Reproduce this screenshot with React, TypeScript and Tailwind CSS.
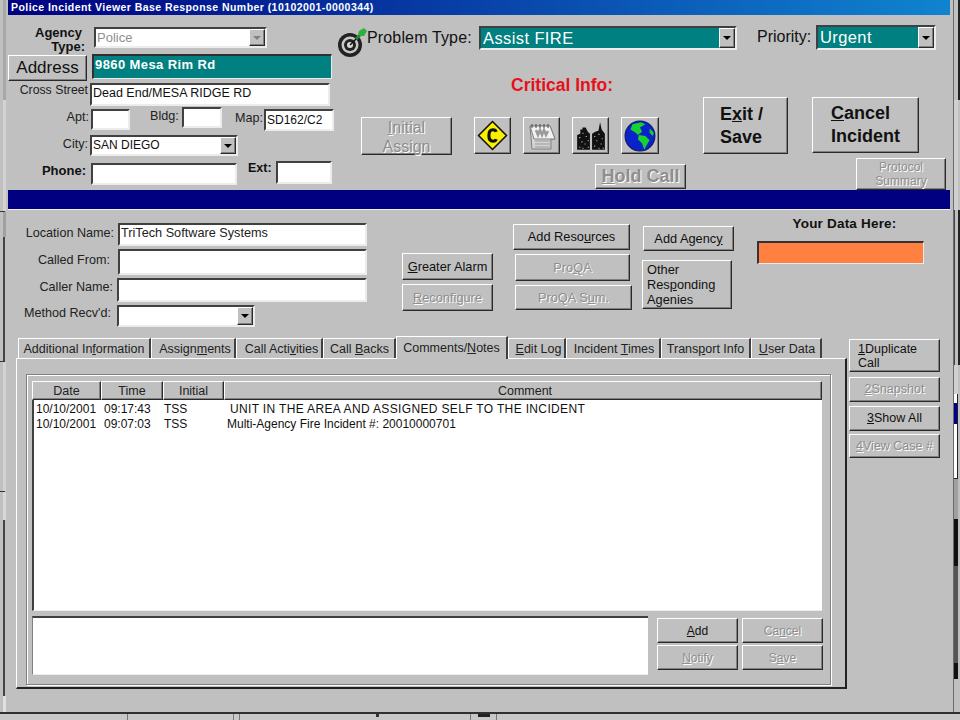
import type { ReactNode } from 'react';

const raised = 'border border-t-white border-l-white border-r-[#2a2a2a] border-b-[#2a2a2a] shadow-[inset_-1px_-1px_0_#808080]';
const sunken = 'border-2 border-t-[#404040] border-l-[#404040] border-r-[#ececec] border-b-[#ececec]';
const disabledText = 'text-[#8e8e8e] [text-shadow:1px_1px_0_#fff]';

function Btn({ className = '', disabled, children }: { className?: string; disabled?: boolean; children: ReactNode }) {
  return (
    <div className={`${raised} bg-[#c0c0c0] flex items-center justify-center shrink-0 ${disabled ? disabledText : 'text-[#111]'} ${className}`}>
      {children}
    </div>
  );
}

function Field({ className = '', children }: { className?: string; children?: ReactNode }) {
  return <div className={`${sunken} bg-white flex items-center px-[1px] shrink-0 whitespace-nowrap ${className}`}>{children}</div>;
}

function Arrow({ disabled }: { disabled?: boolean }) {
  return (
    <div className={`${raised} w-[16px] h-full bg-[#c0c0c0] flex items-center justify-center shrink-0`}>
      <div className={`w-0 h-0 border-x-[4px] border-x-transparent border-t-[4px] ${disabled ? 'border-t-[#808080]' : 'border-t-black'}`} />
    </div>
  );
}

function Combo({ className = '', text, textClass = '', disabled }: { className?: string; text?: string; textClass?: string; disabled?: boolean }) {
  return (
    <div className={`${sunken} flex shrink-0 ${className}`}>
      <div className={`flex-1 flex items-center px-[1px] whitespace-nowrap ${textClass}`}>{text}</div>
      <Arrow disabled={disabled} />
    </div>
  );
}

function Label({ className = '', children }: { className?: string; children: ReactNode }) {
  return <div className={`text-[12.6px] leading-[14px] text-[#222] whitespace-nowrap shrink-0 ${className}`}>{children}</div>;
}

function TargetIcon() {
  return (
    <svg viewBox="0 0 30 30" className="w-[30px] h-[30px] shrink-0">
      <circle cx="12" cy="18" r="12" fill="#222" />
      <circle cx="12" cy="18" r="8.5" fill="#c8c8c8" />
      <circle cx="12" cy="18" r="6" fill="#222" />
      <circle cx="12" cy="18" r="3" fill="#d8d8d8" />
      <path d="M12 18 L19 11" stroke="#111" strokeWidth="1.5" />
      <path d="M18 12 L22 8" stroke="#1c8c2c" strokeWidth="3" />
      <path d="M21 4 L26 1 L29 4 L26 9 L23 9 L20 7 Z" fill="#2cb040" />
    </svg>
  );
}

function DiamondIcon() {
  return (
    <svg viewBox="0 0 30 30" className="w-[31px] h-[31px]">
      <path d="M15 1.5 L28.5 15 L15 28.5 L1.5 15 Z" fill="#f8f000" stroke="#111" strokeWidth="1.5" />
      <path d="M18.5 11.5 Q18 9.5 15.5 9.5 Q11.5 9.5 11.5 15 Q11.5 20.5 15.5 20.5 Q18 20.5 18.5 18.5" fill="none" stroke="#111" strokeWidth="3" />
    </svg>
  );
}

function NotepadIcon() {
  return (
    <svg viewBox="0 0 30 30" className="w-[30px] h-[30px]">
      <path d="M3 5 H23 L28 18 H24 V28 H5 Z" fill="#d4d4d4" stroke="#808080" />
      <path d="M3 5 H23 L28 18 H7 Z" fill="#f2f2f2" stroke="#808080" />
      <path d="M5 3 V7 M9 3 V7 M13 3 V7 M17 3 V7 M21 3 V7" stroke="#444" strokeWidth="1" />
      <path d="M9 9 L11 14 L13 9 L15 14 L17 9 L19 14 L21 10" fill="none" stroke="#9a9a9a" strokeWidth="2.5" />
      <path d="M8 20 H24 M8 23 H24 M8 26 H24" stroke="#9a9a9a" />
    </svg>
  );
}

function CityIcon() {
  return (
    <svg viewBox="0 0 30 30" className="w-[32px] h-[32px]">
      <path d="M2 28 V14 L5 13 V9 L7 9 V7 L10 7 L12 11 L14 13 V28 Z" fill="#111" />
      <path d="M16 28 V13 L19 11 L22 10 L23.5 2 L25 9 L28 13 V28 Z" fill="#111" />
      <path d="M4 16h1v1H4zM7 12h1v1H7zM10 15h1v1h-1zM12 19h1v1h-1zM6 20h1v1H6zM9 22h1v1H9zM4 25h1v1H4zM12 25h1v1h-1zM7 26h1v1H7zM18 15h1v1h-1zM22 13h1v1h-1zM25 17h1v1h-1zM20 19h1v1h-1zM24 22h1v1h-1zM18 24h1v1h-1zM22 26h1v1h-1zM26 26h1v1h-1z" fill="#c4c4c4" />
    </svg>
  );
}

function GlobeIcon() {
  return (
    <svg viewBox="0 0 30 30" className="w-[32px] h-[32px]">
      <circle cx="15" cy="15" r="14" fill="#0a22c8" stroke="#0a1460" />
      <path d="M8 4 L16 2 L20 4 L15 7 L17 11 L13 14 L11 12 L6 9 Z" fill="#18d030" />
      <path d="M14 14 L20 15 L24 19 L21 24 L19 28 L17 22 L13 18 Z" fill="#18d030" />
      <path d="M24 8 L28 12 L27 15 L24 12 Z" fill="#18d030" />
    </svg>
  );
}

const tabs: { label: ReactNode; w: string; pad?: string; active?: boolean }[] = [
  { label: <>Additional In<u>f</u>ormation</>, w: 'w-[133px]' },
  { label: <>Assign<u>m</u>ents</>, w: 'w-[85px]', pad: 'pl-[4px]' },
  { label: <>Call Acti<u>v</u>ities</>, w: 'w-[87px]', pad: 'pl-[5px]' },
  { label: <>Call <u>B</u>acks</>, w: 'w-[73px]', pad: 'pl-[1px]' },
  { label: <>Comments/<u>N</u>otes</>, w: 'w-[112px]', active: true },
  { label: <><u>E</u>dit Log</>, w: 'w-[58px]', pad: 'pl-[4px]' },
  { label: <>Incident <u>T</u>imes</>, w: 'w-[95px]', pad: 'pl-[2px]' },
  { label: <>Trans<u>p</u>ort Info</>, w: 'w-[90px]' },
  { label: <><u>U</u>ser Data</>, w: 'w-[71px]', pad: 'pl-[2px]' },
];

const rows = [
  { date: '10/10/2001', time: '09:17:43', initial: 'TSS', comment: 'UNIT IN THE AREA AND ASSIGNED SELF TO THE INCIDENT', cls: 'pl-[4px] tracking-[0.35px]' },
  { date: '10/10/2001', time: '09:07:03', initial: 'TSS', comment: 'Multi-Agency Fire Incident #: 20010000701', cls: 'pl-[1px]' },
];

export default function App() {
  return (
    <div className="w-[960px] h-[720px] bg-[#c0c0c0] flex flex-col overflow-hidden font-['Liberation_Sans',Arial,sans-serif]">
      <div className="h-[712px] flex shrink-0">
        {/* bits of the desktop windows showing past the left edge */}
        <div className="w-[8px] shrink-0 flex flex-col">
          <div className="h-[100px] w-[3px] ml-[3px] bg-[#a8a8a8]" />
          <div className="h-[111px] w-[3px] ml-[3px] bg-[#d2d2d2]" />
          <div className="h-[1px] w-[5px] bg-[#333]" />
          <div className="h-[25px] w-[3px] ml-[3px] bg-[#a0a0a0]" />
          <div className="h-[124px] w-[2px] ml-[3px] bg-[#444]" />
          <div className="h-[1px] w-[5px] bg-[#333]" />
          <div className="h-[129px] w-[3px] ml-[3px] bg-[#d2d2d2]" />
          <div className="h-[1px] w-[5px] bg-[#333]" />
          <div className="h-[28px] w-[3px] ml-[3px] bg-[#d8d8d8]" />
          <div className="h-[176px] w-[2px] ml-[3px] bg-[#444]" />
          <div className="h-[16px] w-[3px] ml-[3px] bg-[#e0e0e0]" />
        </div>

        <div className="w-[942px] shrink-0 flex flex-col">
          <div className="h-[15px] bg-[linear-gradient(90deg,#000080,#1084d0)] text-white text-[10.5px] font-bold leading-[15px] pl-[3px] tracking-[0.44px] whitespace-nowrap shrink-0">
            Police Incident Viewer Base Response Number (10102001-0000344)
          </div>

          {/* header: address on the left, problem and actions on the right */}
          <div className="h-[175px] flex shrink-0">
            <div className="w-[328px] flex flex-col shrink-0">
              <div className="flex items-start mt-[12px] h-[27px]">
                <div className="w-[78px] text-right text-[13px] leading-[14px] font-bold text-[#111] mt-[-1px] shrink-0 pr-[1px]">
                  <div className="pr-[3px]">Agency</div>
                  <div>Type:</div>
                </div>
                <Combo className="ml-[8px] w-[173px] h-[21px]" text="Police" textClass="bg-white text-[13px] text-[#909090]" disabled />
              </div>
              <div className="flex items-start h-[29px]">
                <Btn className="w-[79px] h-[26px] mt-[1px] text-[17px]">Address</Btn>
                <div className="ml-[5px] w-[240px] h-[25px] bg-[#008080] border-t-2 border-l-2 border-t-[#303030] border-l-[#303030] border-r-[#ececec] border-b-[#ececec] border-r border-b text-white text-[13px] leading-[18px] tracking-[0.4px] font-bold flex items-start pl-[1px] shrink-0 whitespace-nowrap">
                  9860 Mesa Rim Rd
                </div>
              </div>
              <div className="flex items-start h-[24px]">
                <Label className="w-[80px] text-right !text-[12.3px]">Cross Street</Label>
                <Field className="ml-[2px] w-[240px] h-[23px] text-[12.5px] leading-[15px] text-[#111] pb-[2px]">Dead End/MESA RIDGE RD</Field>
              </div>
              <div className="flex items-start h-[28px]">
                <Label className="w-[81px] text-right mt-[3px]">Apt:</Label>
                <Field className="ml-[2px] w-[39px] h-[21px] mt-[2px]" />
                <Label className="ml-[20px] w-[28px] mt-[2px]">Bldg:</Label>
                <Field className="ml-[4px] w-[40px] h-[21px]" />
                <Label className="ml-[13px] w-[28px] mt-[4px]">Map:</Label>
                <Field className="ml-[1px] w-[70px] h-[22px] mt-[2px] text-[12px] text-[#111]">SD162/C2</Field>
              </div>
              <div className="flex items-start h-[26px]">
                <Label className="w-[80px] text-right mt-[2px]">City:</Label>
                <Combo className="ml-[2px] w-[148px] h-[21px]" text="SAN DIEGO" textClass="bg-white text-[12px] leading-[15px] pb-[1px] text-[#111]" />
              </div>
              <div className="flex items-start">
                <div className="w-[78px] text-right text-[13px] leading-[14px] font-bold text-[#111] mt-[3px] shrink-0">Phone:</div>
                <Field className="ml-[5px] w-[146px] h-[22px] mt-[2px]" />
                <div className="ml-[11px] text-[12.5px] leading-[14px] font-bold text-[#111] shrink-0">Ext:</div>
                <Field className="ml-[4px] w-[56px] h-[23px]" />
              </div>
            </div>

            <div className="flex-1 flex flex-col">
              <div className="flex items-start h-[56px] mt-[10px]">
                <div className="ml-[2px] mt-[2px]"><TargetIcon /></div>
                <div className="text-[16px] leading-[26px] tracking-[0.15px] text-[#111] ml-[-1px] w-[112px] whitespace-nowrap shrink-0">Problem Type:</div>
                <Combo className="w-[258px] h-[24px] mt-[1px]" text="Assist FIRE" textClass="bg-[#008080] text-white text-[16.5px] pl-[2px] tracking-[0.4px]" />
                <div className="ml-[20px] text-[16px] leading-[24px] text-[#111] w-[59px] whitespace-nowrap shrink-0">Priority:</div>
                <Combo className="w-[120px] h-[25px]" text="Urgent" textClass="bg-[#008080] text-white text-[16.5px] pl-[2px] tracking-[0.4px]" />
              </div>
              <div className="h-[20px] flex items-start">
                <div className="ml-[175px] text-[17.5px] leading-[20px] font-bold text-[#e8101c] whitespace-nowrap">Critical Info:</div>
              </div>
              <div className="flex items-start h-[60px] mt-[2px]">
                <Btn disabled className="ml-[25px] mt-[20px] w-[91px] h-[38px] pt-[2px] text-[16px] leading-[19px] text-center flex-col"><span><u>I</u>nitial</span><span>Assign</span></Btn>
                <div className="ml-[22px] mt-[20px] flex gap-[12px] shrink-0">
                  <Btn className="w-[37px] h-[37px]"><DiamondIcon /></Btn>
                  <Btn className="w-[37px] h-[37px]"><NotepadIcon /></Btn>
                  <Btn className="w-[37px] h-[37px]"><CityIcon /></Btn>
                  <Btn className="w-[38px] h-[37px]"><GlobeIcon /></Btn>
                </div>
                <Btn className="ml-[44px] w-[85px] h-[57px] text-[18px] leading-[23px] font-bold flex-col items-start pl-[16px]"><span className="self-start">E<u>x</u>it /</span><span className="self-start">Save</span></Btn>
                <Btn className="ml-[24px] w-[107px] h-[56px] text-[18px] leading-[23px] font-bold flex-col pl-[18px]"><span className="self-start"><u>C</u>ancel</span><span className="self-start">Incident</span></Btn>
              </div>
              <div className="flex items-start">
                <Btn disabled className="ml-[259px] mt-[9px] w-[91px] h-[25px] text-[18px] font-bold"><span><u>H</u>old Call</span></Btn>
                <Btn disabled className="ml-[170px] mt-[3px] w-[90px] h-[32px] text-[12px] leading-[14px] flex-col"><span>Protocol</span><span>Summary</span></Btn>
              </div>
            </div>
          </div>

          <div className="h-[20px] bg-[#000080] border-b border-b-[#eeeeee] shrink-0" />

          {/* location block */}
          <div className="h-[126px] flex shrink-0 text-[12.8px]">
            <div className="w-[360px] flex flex-col shrink-0 pt-[13px]">
              <div className="flex items-start h-[26px]">
                <Label className="w-[106px] text-right mt-[3px]">Location Name:</Label>
                <Field className="ml-[4px] w-[249px] h-[23px] text-[12.7px] leading-[15px] pb-[3px] text-[#222]">TriTech Software Systems</Field>
              </div>
              <div className="flex items-start h-[29px]">
                <Label className="w-[102px] text-right mt-[4px]">Called From:</Label>
                <Field className="ml-[8px] w-[249px] h-[26px]" />
              </div>
              <div className="flex items-start h-[27px]">
                <Label className="w-[105px] text-right mt-[2px]">Caller Name:</Label>
                <Field className="ml-[4px] w-[250px] h-[24px]" />
              </div>
              <div className="flex items-start">
                <Label className="w-[103px] text-right mt-[1px]">Method Recv'd:</Label>
                <Combo className="ml-[6px] w-[138px] h-[22px]" textClass="bg-white" />
              </div>
            </div>
            <div className="ml-[34px] pt-[43px] flex flex-col gap-[4px] shrink-0">
              <Btn className="w-[91px] h-[27px]"><span><u>G</u>reater Alarm</span></Btn>
              <Btn disabled className="w-[91px] h-[27px]"><span><u>R</u>econfigure</span></Btn>
            </div>
            <div className="ml-[20px] pt-[14px] flex flex-col gap-[4px] shrink-0">
              <Btn className="w-[117px] h-[26px]"><span>Add Reso<u>u</u>rces</span></Btn>
              <Btn disabled className="ml-[2px] w-[115px] h-[27px]"><span>Pro<u>Q</u>A</span></Btn>
              <Btn disabled className="ml-[2px] w-[117px] h-[25px]"><span>ProQA S<u>u</u>m.</span></Btn>
            </div>
            <div className="ml-[11px] pt-[16px] flex flex-col gap-[9px] shrink-0">
              <Btn className="w-[91px] h-[25px]"><span>Add Agenc<u>y</u></span></Btn>
              <Btn className="w-[90px] h-[49px] leading-[15px] !items-start flex-col pl-[4px] ml-[-1px]"><span>Other</span><span>Res<u>p</u>onding</span><span>Agenies</span></Btn>
            </div>
            <div className="ml-[23px] pt-[6px] flex flex-col items-center shrink-0 w-[167px]">
              <div className="text-[13.5px] leading-[16px] font-bold tracking-[0.2px] text-[#111] whitespace-nowrap ml-[8px]">Your Data Here:</div>
              <div className="mt-[9px] w-[167px] h-[23px] bg-[#ff8040] border-t-2 border-l-2 border-t-[#333] border-l-[#333] border-r border-b border-r-[#ececec] border-b-[#ececec]" />
            </div>
          </div>

          {/* tab strip and panel */}
          <div className="flex flex-1 min-h-0">
            <div className="w-[831px] ml-[8px] shrink-0 flex flex-col">
              <div className="h-[22px] flex items-end pl-[2px] shrink-0 relative z-10">
                {tabs.map((t, i) => (
                  <div
                    key={i}
                    className={`${t.w} ${t.pad ?? ''} text-[12.5px] flex items-center justify-center whitespace-nowrap shrink-0 text-[#222] border-t border-t-white border-l border-l-white border-r-2 border-r-[#404040] ${t.active ? 'h-[23px] mb-[-1px] bg-[#c0c0c0]' : 'h-[20px] pt-[2px]'}`}
                  >
                    <span>{t.label}</span>
                  </div>
                ))}
              </div>
              <div className="h-[331px] w-[831px] border border-t-white border-l-white border-r-[#222] border-b-[#222] border-b-2 border-r-2 pl-[9px] pt-[15px] shrink-0">
                <div className="h-[311px] w-[805px] border border-[#808080] shadow-[1px_1px_0_#fff,inset_1px_1px_0_#fff] px-[5px] pt-[6px] flex flex-col">
                  <div className="h-[19px] flex text-[12.5px] text-[#222] w-[790px] shrink-0 bg-[#c0c0c0]">
                    <div className={`${raised} w-[69px] pt-[1px] flex items-center justify-center`}>Date</div>
                    <div className={`${raised} w-[62px] pt-[1px] flex items-center justify-center`}>Time</div>
                    <div className={`${raised} w-[61px] pt-[1px] flex items-center justify-center`}>Initial</div>
                    <div className={`${raised} flex-1 pt-[1px] pl-[4px] flex items-center justify-center`}>Comment</div>
                  </div>
                  <div className="h-[211px] w-[790px] bg-white border-l-2 border-l-[#404040] border-b border-b-[#ececec] pt-[2px] shrink-0 text-[12px] leading-[15px] text-[#111]">
                    {rows.map((r, i) => (
                      <div key={i} className="flex whitespace-nowrap pl-[2px]">
                        <div className="w-[68px] shrink-0">{r.date}</div>
                        <div className="w-[60px] shrink-0">{r.time}</div>
                        <div className="w-[62px] shrink-0">{r.initial}</div>
                        <div className={r.cls}>{r.comment}</div>
                      </div>
                    ))}
                  </div>
                  <div className="flex items-start mt-[5px]">
                    <div className="w-[616px] h-[59px] bg-white border-t-2 border-t-[#404040] border-l border-l-[#808080] border-b border-b-[#ececec] shrink-0" />
                    <div className="ml-[9px] grid grid-cols-[81px_81px] gap-x-[4px] gap-y-[2px] text-[12px] mt-[2px]">
                      <Btn className="h-[25px]"><span><u>A</u>dd</span></Btn>
                      <Btn disabled className="h-[25px]"><span>Ca<u>n</u>cel</span></Btn>
                      <Btn disabled className="h-[25px]"><span><u>N</u>otify</span></Btn>
                      <Btn disabled className="h-[25px]"><span>S<u>a</u>ve</span></Btn>
                    </div>
                  </div>
                </div>
              </div>
            </div>
            <div className="ml-[2px] pt-[3px] flex flex-col shrink-0 text-[12.5px]">
              <Btn className="w-[91px] h-[33px] leading-[14px] flex-col !items-start pl-[8px]"><span><u>1</u>Duplicate</span><span>Call</span></Btn>
              <Btn disabled className="w-[91px] h-[25px] mt-[5px]"><span><u>2</u>Snapshot</span></Btn>
              <Btn className="w-[91px] h-[25px] mt-[4px]"><span><u>3</u>Show All</span></Btn>
              <Btn disabled className="w-[91px] h-[24px] mt-[3px]"><span><u>4</u>View Case #</span></Btn>
            </div>
          </div>
        </div>

        {/* desktop behind the window, right edge */}
        <div className="flex-1 flex pl-[3px]">
          <div className="w-[1px] bg-[#6a6a6a] shrink-0" />
          <div className="flex-1 flex flex-col">
            <div className="h-[100px] border-r-2 border-r-[#222]" />
            <div className="h-[110px] bg-[#d0d0d0] mr-[2px]" />
            <div className="h-[155px] border-r-2 border-r-[#222] border-l border-l-[#444]" />
            <div className="h-[29px] bg-[#d0d0d0] mr-[2px]" />
            <div className="h-[84px] bg-white mr-[2px] border-r border-r-[#222] pt-[9px]">
              <div className="h-[21px] bg-[#000090]" />
            </div>
            <div className="h-[41px] border-t border-t-[#222] bg-[#a0a0a0] mr-[2px]" />
            <div className="h-[47px] bg-[#111] mr-[2px]" />
            <div className="h-[97px] bg-[#555] mr-[2px]" />
            <div className="h-[16px] bg-[#111] mr-[2px]" />
          </div>
        </div>
      </div>

      <div className="h-[2px] bg-[#303030] shrink-0" />
      <div className="flex-1 bg-[#c8c8c8] flex">
        <div className="ml-[127px] w-[1px] bg-[#777]" />
        <div className="ml-[105px] w-[1px] bg-[#777]" />
        <div className="ml-[5px] w-[1px] bg-[#777]" />
        <div className="ml-[136px] w-[3px] h-[3px] bg-[#333]" />
        <div className="ml-[91px] w-[1px] bg-[#777]" />
        <div className="ml-[7px] w-[12px] h-[3px] bg-[#222]" />
        <div className="ml-[6px] w-[1px] bg-[#777]" />
      </div>
    </div>
  );
}
